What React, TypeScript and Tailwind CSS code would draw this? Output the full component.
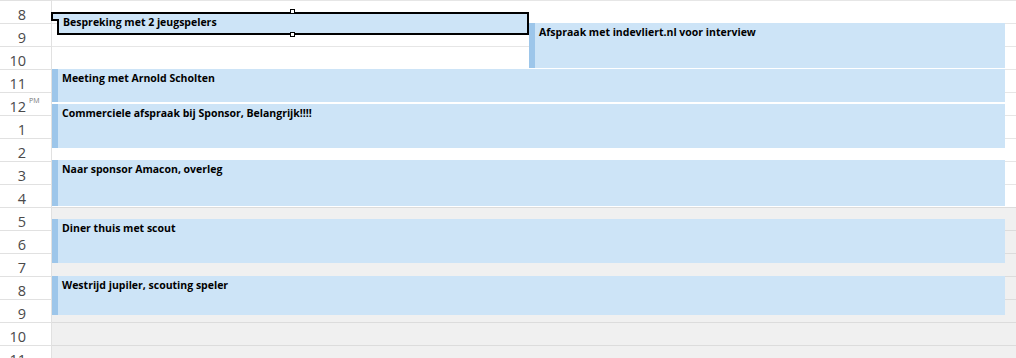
import React from "react";

const hours = ["8", "9", "10", "11", "12", "1", "2", "3", "4", "5", "6", "7", "8", "9", "10", "11"];

type Ev = { title: string; left: number; top: number; width: number; height: number };

const events: Ev[] = [
  { title: "Afspraak met indevliert.nl voor interview", left: 477, top: 23, width: 476, height: 45 },
  { title: "Meeting met Arnold Scholten", left: 0, top: 69, width: 953, height: 33 },
  { title: "Commerciele afspraak bij Sponsor, Belangrijk!!!!", left: 0, top: 104, width: 953, height: 44 },
  { title: "Naar sponsor Amacon, overleg", left: 0, top: 160, width: 953, height: 46 },
  { title: "Diner thuis met scout", left: 0, top: 219, width: 953, height: 44 },
  { title: "Westrijd jupiler, scouting speler", left: 0, top: 276, width: 953, height: 39 },
];

const Event = ({ ev }: { ev: Ev }) => (
  <div
    className="absolute flex bg-[#cde4f7]"
    style={{ left: ev.left, top: ev.top, width: ev.width, height: ev.height }}
  >
    <div className="w-[6px] shrink-0 bg-[#9dc6ea]" />
    <p className="pl-[4px] pt-[2px] text-[10.5px] font-bold leading-[15px] text-black whitespace-nowrap">
      {ev.title}
    </p>
  </div>
);

// geselecteerde afspraak, met zwarte rand en sleepgrepen
const Selected = () => (
  <>
    <div className="absolute left-[5px] top-[12px] w-[472px] h-[23px] border-2 border-black bg-[#cde4f7]">
      <p className="pl-[4px] pt-[1px] text-[10.5px] font-bold leading-[15px] text-black whitespace-nowrap">
        Bespreking met 2 jeugspelers
      </p>
    </div>
    <div className="absolute left-[-1px] top-[12px] w-[8px] h-[9px] border-l-2 border-t-2 border-b-2 border-black bg-[#cde4f7]" />
    <div className="absolute left-[238px] top-[9px] w-[5px] h-[5px] border border-black bg-white" />
    <div className="absolute left-[238px] top-[32px] w-[5px] h-[5px] border border-black bg-white" />
  </>
);

export default function App() {
  return (
    <div
      className="w-[1016px] h-[358px] overflow-hidden flex bg-white"
      style={{ fontFamily: '"Open Sans", "Noto Sans", sans-serif' }}
    >
      <div className="w-[52px] shrink-0 border-r border-[#e1e1e1]">
        {hours.map((h, i) => (
          <div key={i} className="h-[23px] border-t border-[#e1e1e1] flex">
            <div className="w-[26px] text-right pt-[4px] text-[14.5px] leading-[19px] text-[#4a4a4a]">{h}</div>
            {i === 4 && <span className="ml-[3px] mt-[4px] text-[7px] leading-[7px] text-[#777]">PM</span>}
          </div>
        ))}
      </div>
      <div className="relative flex-1">
        {hours.map((_, i) => (
          <div
            key={i}
            className={
              i >= 9
                ? "h-[23px] border-t border-[#dcdcdc] bg-[#f0f0f0]"
                : "h-[23px] border-t border-[#e6e6e6]"
            }
          />
        ))}
        {events.map((ev) => (
          <Event key={ev.title} ev={ev} />
        ))}
        <Selected />
      </div>
    </div>
  );
}
